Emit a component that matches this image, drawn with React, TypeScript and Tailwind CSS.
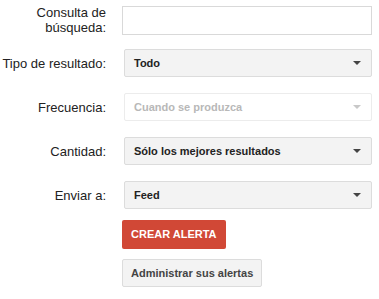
import { ReactNode } from "react";

function Caret({ faded }: { faded?: boolean }) {
  return (
    <svg width="8" height="4" viewBox="0 0 8 4" className="shrink-0">
      <path d="M0 0h8L4 4z" fill={faded ? "#c8c8c8" : "#444"} />
    </svg>
  );
}

function Row({ label, children, className = "" }: { label: ReactNode; children: ReactNode; className?: string }) {
  return (
    <div className={`flex items-center ${className}`}>
      <div className="w-[106px] shrink-0 text-right text-[13px] leading-[15px] text-[#222]">{label}</div>
      <div className="ml-[18px] flex-1">{children}</div>
    </div>
  );
}

function Select({ value, disabled }: { value: string; disabled?: boolean }) {
  return (
    <div
      className={`flex h-[28px] items-center justify-between rounded-[2px] border pl-[9px] pr-[10px] text-[11px] font-bold ${
        disabled ? "border-[#ececec] bg-white text-[#b8b8b8]" : "border-[#dcdcdc] bg-[#f3f3f3] text-[#222]"
      }`}
    >
      <span>{value}</span>
      <Caret faded={disabled} />
    </div>
  );
}

export default function App() {
  return (
    <div className="h-[299px] w-[379px] bg-white pr-[7px] pt-[5px] font-['Liberation_Sans',Arial,sans-serif]">
      <Row label={<>Consulta de<br />búsqueda:</>}>
        <div className="-ml-[2px] mt-[1px] h-[29px] border border-[#d9d9d9] bg-white" />
      </Row>
      <Row label="Tipo de resultado:" className="mt-[14px]">
        <Select value="Todo" />
      </Row>
      <Row label="Frecuencia:" className="mt-[16px]">
        <Select value="Cuando se produzca" disabled />
      </Row>
      <Row label="Cantidad:" className="mt-[16px]">
        <Select value="Sólo los mejores resultados" />
      </Row>
      <Row label="Enviar a:" className="mt-[16px]">
        <Select value="Feed" />
      </Row>
      <div className="ml-[122px] mt-[11px] flex flex-col items-start gap-[10px]">
        <button className="h-[29px] rounded-[2px] bg-[#d14836] px-[9px] text-[11px] font-bold text-white">
          CREAR ALERTA
        </button>
        <button className="h-[28px] rounded-[2px] border border-[#dcdcdc] bg-[#f3f3f3] px-[8px] text-[11px] font-bold text-[#444]">
          Administrar sus alertas
        </button>
      </div>
    </div>
  );
}
